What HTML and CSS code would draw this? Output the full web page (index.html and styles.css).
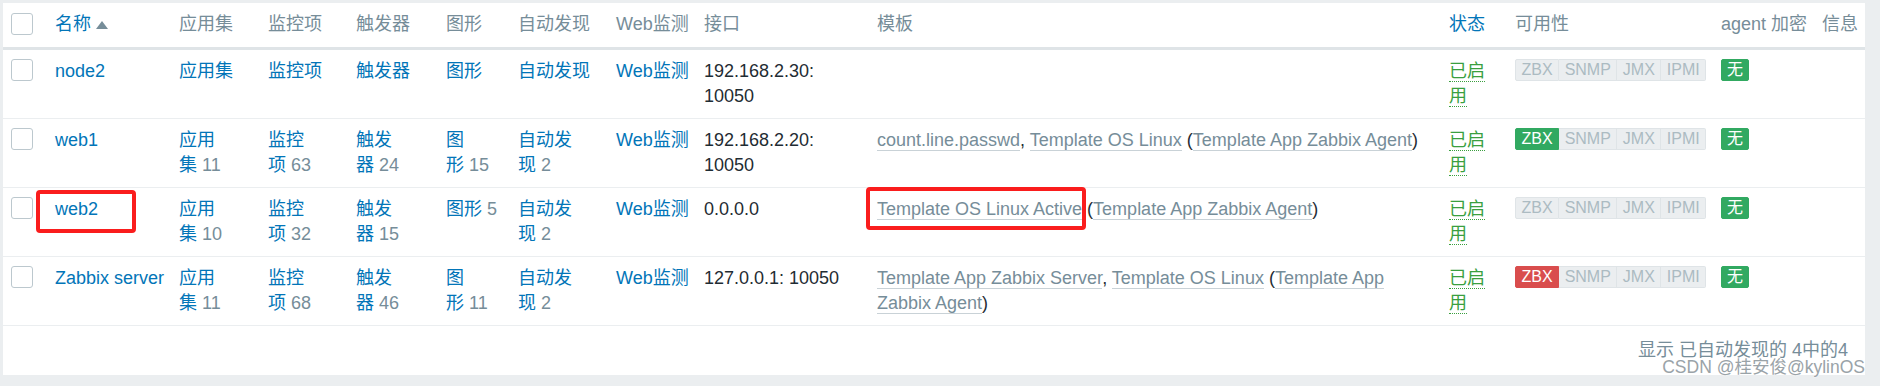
FILE: index.html
```html
<!DOCTYPE html>
<html lang="zh-CN">
<head>
<meta charset="utf-8">
<title>主机</title>
<link rel="stylesheet" href="styles.css">
</head>
<body>
<div class="page">
  <div class="panel">
    <table class="list">
      <colgroup>
        <col class="c-check"><col class="c-name"><col class="c-app"><col class="c-item"><col class="c-trig"><col class="c-graph"><col class="c-disc"><col class="c-web"><col class="c-if"><col class="c-tpl"><col class="c-status"><col class="c-avail"><col class="c-enc"><col class="c-info">
      </colgroup>
      <thead>
        <tr>
          <th class="chk"><span class="checkbox"></span></th>
          <th><a class="link">名称</a><span class="arrow-up"></span></th>
          <th>应用集</th>
          <th>监控项</th>
          <th>触发器</th>
          <th>图形</th>
          <th>自动发现</th>
          <th>Web监测</th>
          <th>接口</th>
          <th>模板</th>
          <th><a class="link">状态</a></th>
          <th>可用性</th>
          <th>agent 加密</th>
          <th>信息</th>
        </tr>
      </thead>
      <tbody>
        <tr>
          <td class="chk"><span class="checkbox"></span></td>
          <td><a class="link nowrap">node2</a></td>
          <td><a class="link">应用集</a></td>
          <td><a class="link">监控项</a></td>
          <td><a class="link">触发器</a></td>
          <td><a class="link">图形</a></td>
          <td><a class="link">自动发现</a></td>
          <td><a class="link nowrap">Web监测</a></td>
          <td class="dark">192.168.2.30: 10050</td>
          <td></td>
          <td><a class="status-on">已启用</a></td>
          <td>
            <span class="avail"><span class="st grey">ZBX</span><span class="st grey">SNMP</span><span class="st grey">JMX</span><span class="st grey">IPMI</span></span>
          </td>
          <td><span class="enc">无</span></td>
          <td></td>
        </tr>
        <tr>
          <td class="chk"><span class="checkbox"></span></td>
          <td><a class="link nowrap">web1</a></td>
          <td><a class="link">应用集</a>&nbsp;<span class="num">11</span></td>
          <td><a class="link">监控项</a>&nbsp;<span class="num">63</span></td>
          <td><a class="link">触发器</a>&nbsp;<span class="num">24</span></td>
          <td><a class="link">图形</a>&nbsp;<span class="num">15</span></td>
          <td><a class="link">自动发现</a>&nbsp;<span class="num">2</span></td>
          <td><a class="link nowrap">Web监测</a></td>
          <td class="dark">192.168.2.20: 10050</td>
          <td class="dark"><a class="alt">count.line.passwd</a>, <a class="alt">Template OS Linux</a> (<a class="alt">Template App Zabbix Agent</a>)</td>
          <td><a class="status-on">已启用</a></td>
          <td>
            <span class="avail"><span class="st green">ZBX</span><span class="st grey">SNMP</span><span class="st grey">JMX</span><span class="st grey">IPMI</span></span>
          </td>
          <td><span class="enc">无</span></td>
          <td></td>
        </tr>
        <tr>
          <td class="chk"><span class="checkbox"></span></td>
          <td><a class="link nowrap">web2</a></td>
          <td><a class="link">应用集</a>&nbsp;<span class="num">10</span></td>
          <td><a class="link">监控项</a>&nbsp;<span class="num">32</span></td>
          <td><a class="link">触发器</a>&nbsp;<span class="num">15</span></td>
          <td><a class="link">图形</a>&nbsp;<span class="num">5</span></td>
          <td><a class="link">自动发现</a>&nbsp;<span class="num">2</span></td>
          <td><a class="link nowrap">Web监测</a></td>
          <td class="dark">0.0.0.0</td>
          <td class="dark"><a class="alt">Template OS Linux Active</a> (<a class="alt">Template App Zabbix Agent</a>)</td>
          <td><a class="status-on">已启用</a></td>
          <td>
            <span class="avail"><span class="st grey">ZBX</span><span class="st grey">SNMP</span><span class="st grey">JMX</span><span class="st grey">IPMI</span></span>
          </td>
          <td><span class="enc">无</span></td>
          <td></td>
        </tr>
        <tr>
          <td class="chk"><span class="checkbox"></span></td>
          <td><a class="link nowrap">Zabbix server</a></td>
          <td><a class="link">应用集</a>&nbsp;<span class="num">11</span></td>
          <td><a class="link">监控项</a>&nbsp;<span class="num">68</span></td>
          <td><a class="link">触发器</a>&nbsp;<span class="num">46</span></td>
          <td><a class="link">图形</a>&nbsp;<span class="num">11</span></td>
          <td><a class="link">自动发现</a>&nbsp;<span class="num">2</span></td>
          <td><a class="link nowrap">Web监测</a></td>
          <td class="dark">127.0.0.1: 10050</td>
          <td class="dark"><a class="alt">Template App Zabbix Server</a>, <a class="alt">Template OS Linux</a> (<a class="alt">Template App Zabbix Agent</a>)</td>
          <td><a class="status-on">已启用</a></td>
          <td>
            <span class="avail"><span class="st red">ZBX</span><span class="st grey">SNMP</span><span class="st grey">JMX</span><span class="st grey">IPMI</span></span>
          </td>
          <td><span class="enc">无</span></td>
          <td></td>
        </tr>
      </tbody>
    </table>
    <div class="paging">显示 已自动发现的 4中的4</div>
  </div>
  <div class="mark mark-name"></div>
  <div class="mark mark-tpl"></div>
  <div class="watermark">CSDN @桂安俊@kylinOS</div>
</div>
</body>
</html>
```

FILE: styles.css
```css
html, body {
  margin: 0;
  padding: 0;
}

body {
  background: #ebeef0;
  font-family: "Liberation Sans", Arial, "Noto Sans CJK SC", sans-serif;
  font-size: 18px;
  line-height: 25px;
  color: #1f2c33;
}

.page {
  position: relative;
  width: 1880px;
  height: 386px;
  overflow: hidden;
}

.panel {
  margin: 3px 15px 0 3px;
  width: 1862px;
  height: 372px;
  background: #ffffff;
}

.list {
  width: 1862px;
  table-layout: fixed;
  border-collapse: collapse;
}

.c-check { width: 45px; }
.c-name { width: 124px; }
.c-app { width: 89px; }
.c-item { width: 88px; }
.c-trig { width: 90px; }
.c-graph { width: 72px; }
.c-disc { width: 98px; }
.c-web { width: 88px; }
.c-if { width: 173px; }
.c-tpl { width: 572px; }
.c-status { width: 66px; }
.c-avail { width: 206px; }
.c-enc { width: 101px; }
.c-info { width: 50px; }

.list th {
  text-align: left;
  font-weight: normal;
  color: #768d99;
  padding: 9px 7px 10px 7px;
  vertical-align: top;
  border-bottom: 3px solid #dfe4e7;
  white-space: nowrap;
}

.list td {
  padding: 9px 7px;
  vertical-align: top;
  border-bottom: 1px solid #ebeef0;
}

.list .chk {
  padding-left: 8px;
  padding-right: 0;
}

.checkbox {
  display: block;
  width: 20px;
  height: 20px;
  border: 1px solid #bcc8ce;
  border-radius: 3px;
  background: #ffffff;
}

.list th .checkbox {
  margin-top: 1px;
}

.link {
  color: #0275b8;
  text-decoration: none;
}

.nowrap {
  white-space: nowrap;
}

.arrow-up {
  display: inline-block;
  width: 0;
  height: 0;
  margin-left: 5px;
  border-left: 6px solid transparent;
  border-right: 6px solid transparent;
  border-bottom: 8px solid #768d99;
  vertical-align: 1px;
}

.num {
  color: #768d99;
}

.dark {
  color: #1f2c33;
}

.alt {
  color: #768d99;
  text-decoration: none;
  border-bottom: 1px solid #c9d2d7;
}

.status-on {
  color: #3a9f3f;
  text-decoration: none;
  border-bottom: 1px dotted #3a9f3f;
}

.avail {
  display: inline-flex;
  vertical-align: top;
  font-size: 16px;
  line-height: 20px;
}

.st {
  display: block;
  padding: 0 5.5px;
  border: 1px solid #dfe4e7;
  border-left-width: 0;
}

.st:first-child {
  border-left-width: 1px;
  border-radius: 2px 0 0 2px;
}

.st:last-child {
  border-radius: 0 2px 2px 0;
}

.st.grey {
  background: #ebeef0;
  color: #acbbc2;
}

.st.green {
  background: #31a961;
  border-color: #31a961;
  color: #ffffff;
}

.st.red {
  background: #d94d4d;
  border-color: #d94d4d;
  color: #ffffff;
}

.enc {
  display: inline-block;
  vertical-align: top;
  font-size: 16px;
  line-height: 20px;
  padding: 0 5px;
  border: 1px solid #31a961;
  border-radius: 2px;
  background: #31a961;
  color: #ffffff;
}

.paging {
  text-align: right;
  color: #768d99;
  padding: 12px 17px 12px 0;
}

.mark {
  position: absolute;
  border: 4px solid #fa1d1d;
  border-radius: 4px;
}

.mark-name {
  left: 36px;
  top: 190px;
  width: 92px;
  height: 35px;
}

.mark-tpl {
  left: 866px;
  top: 187px;
  width: 212px;
  height: 35px;
}

.watermark {
  position: absolute;
  right: 15px;
  top: 357px;
  font-size: 17.5px;
  line-height: 20px;
  color: #9aa3a8;
  text-shadow: 0 0 2px #ffffff, 0 0 1px #ffffff;
  white-space: nowrap;
}
```
